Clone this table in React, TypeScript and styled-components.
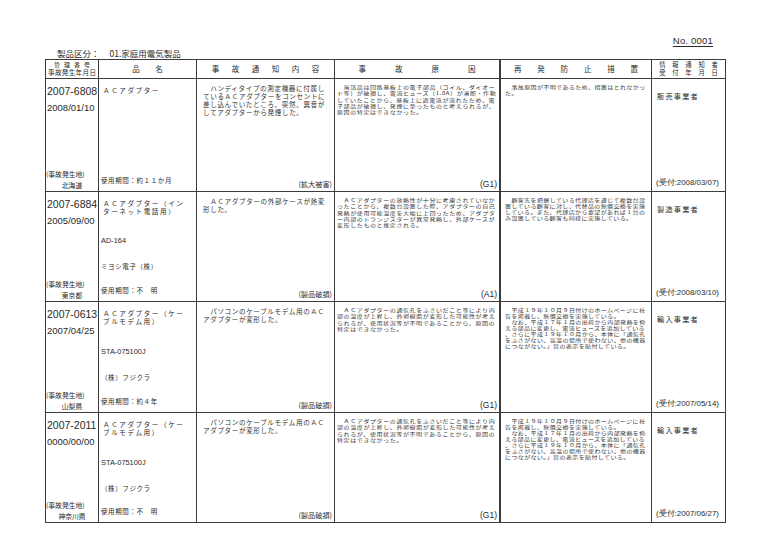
import React from "react";
import styled, { createGlobalStyle } from "styled-components";

const GlobalStyle = createGlobalStyle`
  html, body { margin: 0; padding: 0; background: #ffffff; }
  body {
    font-family: "Noto Sans CJK JP", "Noto Sans", sans-serif;
    color: #2a2a2a;
  }
`;

const COLS = "53px 98px 138px 166px 151px 1fr";
const LINE = "#3c3c3c";

const Page = styled.div`
  width: 768px;
  height: 543px;
  box-sizing: border-box;
  padding: 34px 0 0 45px;
  overflow: hidden;
`;

const Sheet = styled.div`
  width: 681px;
  display: flex;
  flex-direction: column;
`;

const NoLine = styled.div`
  height: 13px;
  display: flex;
  justify-content: flex-end;
  align-items: center;
  padding-right: 13px;
  font-family: "Liberation Sans", Arial, sans-serif;
  font-size: 9.5px;
  letter-spacing: 0.2px;
  span {
    text-decoration: underline;
    text-underline-offset: 1.5px;
  }
`;

const Category = styled.div`
  height: 12px;
  display: flex;
  align-items: center;
  gap: 10px;
  padding-left: 12px;
  font-size: 8.5px;
  line-height: 12px;
`;

const Table = styled.div`
  border: 1.5px solid ${LINE};
  display: flex;
  flex-direction: column;
`;

const Row = styled.div<{ $h: number; $last?: boolean }>`
  display: grid;
  grid-template-columns: ${COLS};
  height: ${(p) => p.$h}px;
  box-sizing: border-box;
  border-bottom: ${(p) => (p.$last ? "none" : `1px solid ${LINE}`)};
`;

const HeadCell = styled.div<{ $thick?: boolean }>`
  border-right: ${(p) => (p.$thick ? 2 : 1)}px solid ${LINE};
  display: flex;
  flex-direction: column;
  align-items: center;
  justify-content: center;
  &:last-child { border-right: none; }
`;

const Spaced = styled.div<{ $gap: number; $size?: number }>`
  display: flex;
  gap: ${(p) => p.$gap}px;
  font-size: ${(p) => p.$size ?? 7.5}px;
  line-height: ${(p) => (p.$size ?? 7.5) + 1.8}px;
`;

const Cell = styled.div<{ $thick?: boolean }>`
  border-right: ${(p) => (p.$thick ? 2 : 1)}px solid ${LINE};
  display: flex;
  flex-direction: column;
  justify-content: space-between;
  overflow: hidden;
  min-width: 0;
  &:last-child { border-right: none; }
`;

/* column 1 */
const IdNo = styled.div`
  font-family: "Liberation Sans", Arial, sans-serif;
  font-size: 10.5px;
  line-height: 12px;
  padding: 6px 0 0 1px;
`;
const DateText = styled.div`
  font-family: "Liberation Sans", Arial, sans-serif;
  font-size: 9.5px;
  line-height: 11px;
  margin-top: 5px;
  padding-left: 1px;
`;
const PlaceBlock = styled.div`
  display: flex;
  flex-direction: column;
  font-size: 6.8px;
  line-height: 11px;
  white-space: nowrap;
`;
const PlaceName = styled.div`
  text-align: center;
  width: 52px;
`;

/* column 2 */
const ProductName = styled.div`
  font-size: 6.6px;
  letter-spacing: 1.55px;
  line-height: 8.5px;
  white-space: pre;
  padding: 7px 0 0 4px;
`;
const SubLines = styled.div`
  display: flex;
  flex-direction: column;
`;
const SubLine = styled.div<{ $h: number; $latin?: boolean }>`
  height: ${(p) => p.$h}px;
  display: flex;
  align-items: center;
  padding-left: 2px;
  font-family: ${(p) =>
    p.$latin ? `"Liberation Sans", Arial, sans-serif` : `"Noto Sans CJK JP", sans-serif`};
  font-size: ${(p) => (p.$latin ? 7.4 : 6.5)}px;
  letter-spacing: ${(p) => (p.$latin ? 0 : 0.6)}px;
  white-space: pre;
`;

/* small print: laid out at double size, then scaled down (slightly wider than tall,
   like the condensed print of the source form) */
const Body = styled.div<{ $fs: number; $ls: number; $lh: number; $sx: number; $pl: number; $pt: number }>`
  font-size: ${(p) => p.$fs}px;
  letter-spacing: ${(p) => p.$ls}px;
  line-height: ${(p) => p.$lh}px;
  margin: ${(p) => p.$pt}px 0 0 ${(p) => p.$pl}px;
  color: #333333;
  white-space: pre;
  transform: scale(${(p) => p.$sx}, 0.5);
  transform-origin: 0 0;
`;
const Tag = styled.div<{ $latin?: boolean }>`
  align-self: flex-end;
  font-family: ${(p) =>
    p.$latin ? `"Liberation Sans", Arial, sans-serif` : `"Noto Sans CJK JP", sans-serif`};
  font-size: ${(p) => (p.$latin ? 8.5 : 7.2)}px;
  line-height: 12px;
  padding: 0 2px 1px 0;
`;

/* column 6 */
const Reporter = styled.div`
  font-size: 7.2px;
  letter-spacing: 1.2px;
  line-height: 10px;
  padding: 12px 0 0 5px;
`;
const Received = styled.div`
  font-family: "Liberation Sans", Arial, sans-serif;
  font-size: 7.9px;
  line-height: 12px;
  padding: 0 0 2px 4px;
  white-space: nowrap;
`;

type Rec = {
  id: string;
  date: string;
  place: string;
  name: string;
  model: string;
  maker: string;
  usage: string;
  notice: string;
  damage: string;
  cause: string;
  grade: string;
  measure: string;
  reporter: string;
  received: string;
  h: number;
};

const P3 = "ＡＣアダプター（ケー\nブルモデム用）";
const CAUSE3 =
  "　ＡＣアダプターの通気孔をふさいだこと等により内\n部の温度が上昇し、外郭樹脂が変形した可能性が考え\nられるが、使用状況等が不明であることから、原因の\n特定はできなかった。";
const MEASURE3 =
  "　平成１９年１０月９日付けのホームページに社\n告を掲載し、無償交換を実施している。\n　なお、平成１７年１月の出荷から内部発熱を抑\nえる部品に変更し、電流ヒューズを追加している\n、さらに平成１９年１０月から、本体に「通気孔\nをふさがない、高温の場所で使わない、他の機器\nにつながない。」旨の表示を貼付している。";
const NOTICE3 = "　パソコンのケーブルモデム用のＡＣ\nアダプターが変形した。";

const records: Rec[] = [
  {
    id: "2007-6808",
    date: "2008/01/10",
    place: "北海道",
    name: "ＡＣアダプター",
    model: "",
    maker: "",
    usage: "使用期間：約１１か月",
    notice:
      "　ハンディタイプの測定機器に付属し\nているＡＣアダプターをコンセントに\n差し込んでいたところ、突然、異音が\nしてアダプターから発煙した。",
    damage: "(拡大被害)",
    cause:
      "　当該品は回路基板上の電子部品（コイル、ダイオー\nド等）が破損し、電流ヒューズ（1.0A）が溶断・作動\nしていたことから、基板上に過電流が流れたため、電\n子部品が破損し、発煙に至ったものと考えられるが、\n原因の特定はできなかった。",
    grade: "(G1)",
    measure: "　事故原因が不明であるため、措置はとれなかっ\nた。",
    reporter: "販売事業者",
    received: "(受付:2008/03/07)",
    h: 113,
  },
  {
    id: "2007-6884",
    date: "2005/09/00",
    place: "東京都",
    name: "ＡＣアダプター（イン\nターネット電話用）",
    model: "AD-164",
    maker: "ミヨシ電子（株）",
    usage: "使用期間：不　明",
    notice: "　ＡＣアダプターの外部ケースが熱変\n形した。",
    damage: "(製品破損)",
    cause:
      "　ＡＣアダプターの放熱性が十分に考慮されていなか\nったことから、複数台設置した際、アダプターの自己\n発熱が使用可能温度を大幅に上回ったため、アダプタ\nー内部のトランジスターが異常発熱し、外部ケースが\n変形したものと推定される。",
    grade: "(A1)",
    measure:
      "　顧客先を把握している代理店を通じて複数台設\n置している顧客に対し、代替品の無償交換を実施\nしている。また、代理店から要望があれば１台の\nみ設置している顧客も同様に実施している。",
    reporter: "製造事業者",
    received: "(受付:2008/03/10)",
    h: 110,
  },
  {
    id: "2007-0613",
    date: "2007/04/25",
    place: "山梨県",
    name: P3,
    model: "STA-075100J",
    maker: "（株）フジクラ",
    usage: "使用期間：約４年",
    notice: NOTICE3,
    damage: "(製品破損)",
    cause: CAUSE3,
    grade: "(G1)",
    measure: MEASURE3,
    reporter: "輸入事業者",
    received: "(受付:2007/05/14)",
    h: 111,
  },
  {
    id: "2007-2011",
    date: "0000/00/00",
    place: "神奈川県",
    name: P3,
    model: "STA-075100J",
    maker: "（株）フジクラ",
    usage: "使用期間：不　明",
    notice: NOTICE3,
    damage: "(製品破損)",
    cause: CAUSE3,
    grade: "(G1)",
    measure: MEASURE3,
    reporter: "輸入事業者",
    received: "(受付:2007/06/27)",
    h: 109.5,
  },
];

const chars = (s: string) => s.split("").map((c, i) => <span key={i}>{c}</span>);

export default function App() {
  return (
    <>
      <GlobalStyle />
      <Page>
        <Sheet>
          <NoLine>
            <span>No. 0001</span>
          </NoLine>
          <Category>
            <span>製品区分：</span>
            <span>01.家庭用電気製品</span>
          </Category>
          <Table>
            <Row $h={18.5}>
              <HeadCell>
                <Spaced $gap={4} $size={6}>{chars("管理番号")}</Spaced>
                <Spaced $gap={0.3} $size={6.6}>{chars("事故発生年月日")}</Spaced>
              </HeadCell>
              <HeadCell>
                <Spaced $gap={15.5}>{chars("品名")}</Spaced>
              </HeadCell>
              <HeadCell>
                <Spaced $gap={12.5}>{chars("事故通知内容")}</Spaced>
              </HeadCell>
              <HeadCell $thick>
                <Spaced $gap={29}>{chars("事故原因")}</Spaced>
              </HeadCell>
              <HeadCell>
                <Spaced $gap={15.8}>{chars("再発防止措置")}</Spaced>
              </HeadCell>
              <HeadCell>
                <Spaced $gap={6.8} $size={6.3}>{chars("情報通知者")}</Spaced>
                <Spaced $gap={6.8} $size={6.3}>{chars("受付年月日")}</Spaced>
              </HeadCell>
            </Row>
            {records.map((r, i) => (
              <Row key={r.id + i} $h={r.h} $last={i === records.length - 1}>
                <Cell>
                  <div>
                    <IdNo>{r.id}</IdNo>
                    <DateText>{r.date}</DateText>
                  </div>
                  <PlaceBlock>
                    <div>(事故発生地)</div>
                    <PlaceName>{r.place}</PlaceName>
                  </PlaceBlock>
                </Cell>
                <Cell>
                  <ProductName>{r.name}</ProductName>
                  <SubLines>
                    <SubLine $h={26} $latin>{r.model}</SubLine>
                    <SubLine $h={25}>{r.maker}</SubLine>
                    <SubLine $h={22}>{r.usage}</SubLine>
                  </SubLines>
                </Cell>
                <Cell>
                  <Body $fs={13.2} $ls={1.2} $lh={16} $sx={0.5} $pl={5.5} $pt={5}>
                    {r.notice}
                  </Body>
                  <Tag>{r.damage}</Tag>
                </Cell>
                <Cell $thick>
                  <Body $fs={10} $ls={1} $lh={12.4} $sx={0.6} $pl={2} $pt={5.5}>
                    {r.cause}
                  </Body>
                  <Tag $latin>{r.grade}</Tag>
                </Cell>
                <Cell>
                  <Body $fs={10} $ls={0.65} $lh={12} $sx={0.6} $pl={3.5} $pt={5.5}>
                    {r.measure}
                  </Body>
                </Cell>
                <Cell>
                  <Reporter>{r.reporter}</Reporter>
                  <Received>{r.received}</Received>
                </Cell>
              </Row>
            ))}
          </Table>
        </Sheet>
      </Page>
    </>
  );
}
